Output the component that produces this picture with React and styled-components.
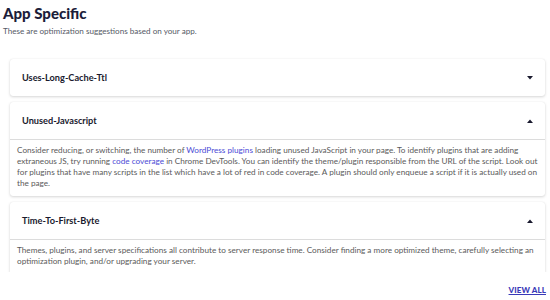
import React, { useState } from "react";
import styled, { createGlobalStyle } from "styled-components";

const Global = createGlobalStyle`
  html, body { margin: 0; padding: 0; background: #fff; }
  body { font-family: "Lato", "Open Sans", sans-serif; }
`;

const Page = styled.div`
  width: 550px;
  height: 300px;
  box-sizing: border-box;
  padding: 4px 0 0 3px;
  display: flex;
  flex-direction: column;
  overflow: hidden;
`;

const Title = styled.h1`
  margin: 0;
  font-size: 15px;
  line-height: 18px;
  font-weight: 900;
  color: #1c1d3a;
`;

const Subtitle = styled.p`
  margin: 4px 0 0;
  font-size: 8.1px;
  line-height: 11px;
  color: #555a66;
`;

const Scroll = styled.div`
  margin-top: 17px;
  height: 213px;
  overflow: hidden;
  padding: 5px 5px 0 7px;
  display: flex;
  flex-direction: column;
  gap: 6px;
`;

const Card = styled.div`
  flex: none;
  background: #fff;
  border-radius: 3px;
  box-shadow: 0 1px 3px rgba(0, 0, 0, 0.16), 0 0 1px rgba(0, 0, 0, 0.1);
`;

const Header = styled.div`
  height: 37px;
  display: flex;
  align-items: center;
  justify-content: space-between;
  padding: 0 12px 0 12px;
  border-bottom: ${(p) => (p.$open ? "1px solid #dcdcdc" : "none")};
  cursor: pointer;
`;

const HeaderTitle = styled.span`
  font-size: 9.2px;
  font-weight: 700;
  color: #1a1a2e;
`;

const Caret = styled.svg`
  width: 6px;
  height: 4px;
`;

const Body = styled.div`
  padding: 5px 6px 7px 7px;
  font-size: 8.2px;
  line-height: 11px;
  color: #5a5a5a;
`;

const Link = styled.a`
  color: #4b4bd6;
  text-decoration: none;
`;

const Footer = styled.div`
  display: flex;
  justify-content: flex-end;
  padding: 13px 4px 0 0;
`;

const ViewAll = styled.a`
  font-size: 8px;
  line-height: 10px;
  font-weight: 900;
  color: #3a3ab8;
  text-decoration: underline;
  letter-spacing: 0.1px;
`;

const items = [
  { title: "Uses-Long-Cache-Ttl", open: false },
  {
    title: "Unused-Javascript",
    open: true,
    body: (
      <>
        Consider reducing, or switching, the number of <Link>WordPress plugins</Link> loading unused
        JavaScript in your page. To identify plugins that are adding extraneous JS, try running{" "}
        <Link>code coverage</Link> in Chrome DevTools. You can identify the theme/plugin responsible
        from the URL of the script. Look out for plugins that have many scripts in the list which have
        a lot of red in code coverage. A plugin should only enqueue a script if it is actually used on
        the page.
      </>
    ),
  },
  {
    title: "Time-To-First-Byte",
    open: true,
    body: (
      <>
        Themes, plugins, and server specifications all contribute to server response time. Consider
        finding a more optimized theme, carefully selecting an optimization plugin, and/or upgrading
        your server.
      </>
    ),
  },
];

function CaretIcon({ up }) {
  return (
    <Caret viewBox="0 0 6 4">
      {up ? <path d="M0 4 L3 0.5 L6 4 Z" fill="#1a1a2e" /> : <path d="M0 0 L6 0 L3 3.5 Z" fill="#1a1a2e" />}
    </Caret>
  );
}

export default function App() {
  const [state, setState] = useState(items.map((i) => i.open));
  return (
    <>
      <Global />
      <Page>
        <Title>App Specific</Title>
        <Subtitle>These are optimization suggestions based on your app.</Subtitle>
        <Scroll>
          {items.map((it, idx) => (
            <Card key={it.title}>
              <Header
                $open={state[idx]}
                onClick={() => setState((s) => s.map((v, j) => (j === idx ? !v : v)))}
              >
                <HeaderTitle>{it.title}</HeaderTitle>
                <CaretIcon up={state[idx]} />
              </Header>
              {state[idx] && it.body && <Body>{it.body}</Body>}
            </Card>
          ))}
        </Scroll>
        <Footer>
          <ViewAll href="#">VIEW ALL</ViewAll>
        </Footer>
      </Page>
    </>
  );
}
